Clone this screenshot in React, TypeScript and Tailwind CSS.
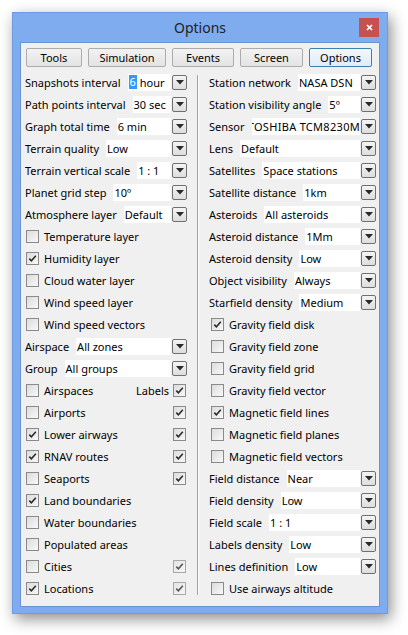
import React from "react";

const Tri = () => (
  <svg width="8" height="5" viewBox="0 0 8 5">
    <path d="M0 0H8L4 4.5Z" fill="#2a2a2a" />
  </svg>
);

const DropBtn = () => (
  <div className="ml-[1px] w-[15px] h-[15px] shrink-0 rounded-[2px] border border-[#707070] bg-linear-to-b from-[#f4f4f4] to-[#dddddd] flex items-center justify-center">
    <Tri />
  </div>
);

type ComboProps = { label: string; value: string; sel?: string; clip?: boolean };

const Combo = ({ label, value, sel, clip }: ComboProps) => (
  <div className="h-[22px] flex items-center">
    <span className="whitespace-nowrap">{label}</span>
    <div
      className={
        clip
          ? "ml-[7px] flex-1 min-w-0 h-[17px] bg-white flex items-center justify-end overflow-hidden whitespace-nowrap"
          : "ml-[7px] flex-1 min-w-0 h-[17px] bg-white flex items-center overflow-hidden whitespace-nowrap pl-[1px]"
      }
    >
      {sel ? (
        <span className="bg-[#3399ff] text-white h-[14px] leading-[14px] px-[1px]">{sel}</span>
      ) : null}
      <span className={clip ? "whitespace-pre shrink-0 tracking-[0.3px]" : "whitespace-pre"}>{value}</span>
    </div>
    <DropBtn />
  </div>
);

const Box = ({ checked, disabled }: { checked?: boolean; disabled?: boolean }) => (
  <div
    className={
      disabled
        ? "w-[13px] h-[13px] shrink-0 border border-[#a8a8a8] bg-linear-to-br from-[#e4e4e4] to-[#f6f6f6] flex items-center justify-center"
        : "w-[13px] h-[13px] shrink-0 border border-[#8a8a8a] bg-linear-to-br from-[#dcdcdc] to-[#f8f8f8] flex items-center justify-center"
    }
  >
    {checked ? (
      <svg width="9" height="9" viewBox="0 0 9 9">
        <path
          d="M1.3 4.6L3.4 6.8L7.8 1.8"
          fill="none"
          stroke={disabled ? "#555" : "#2b2b2b"}
          strokeWidth="1.6"
        />
      </svg>
    ) : null}
  </div>
);

type CheckProps = {
  label: string;
  checked?: boolean;
  right?: boolean;
  rightLabel?: string;
  rightDisabled?: boolean;
  offset?: "l" | "r";
};

const Check = ({ label, checked, right, rightLabel, rightDisabled, offset = "l" }: CheckProps) => (
  <div className="h-[22px] flex items-center">
    <div className={offset === "l" ? "ml-[1px]" : "ml-[2px]"}>
      <Box checked={checked} />
    </div>
    <span className="ml-[5px] whitespace-nowrap">{label}</span>
    {right !== undefined ? (
      <div className="ml-auto flex items-center mr-[1px]">
        {rightLabel ? <span className="mr-[4px]">{rightLabel}</span> : null}
        <Box checked={right} disabled={rightDisabled} />
      </div>
    ) : null}
  </div>
);

const Tab = ({ label, w, active }: { label: string; w: string; active?: boolean }) => (
  <div
    className={
      (active
        ? "border-[#3c7fb1] from-[#f2f8fd] to-[#dfecf8] "
        : "border-[#acacac] from-[#f2f2f2] to-[#e3e3e3] ") +
      w +
      " h-[19px] border bg-linear-to-b flex items-center justify-center rounded-[2px]"
    }
  >
    {label}
  </div>
);

export default function App() {
  return (
    <div className="w-[408px] h-[635px] bg-white pt-[12px] pl-[12px] font-['Noto_Sans',sans-serif] text-[11px] text-black leading-none">
      <div className="w-[376px] h-[602px] border border-[#6d9be3] bg-[#7fabef] shadow-[3px_5px_14px_rgba(0,0,0,0.45)] flex flex-col">
        {/* title bar */}
        <div className="h-[29px] grid grid-cols-[1fr_auto_1fr] items-start shrink-0">
          <div />
          <div className="text-[14px] text-[#222] mt-[8px]">Options</div>
          <div className="flex justify-end pr-[8px] pt-[5px]">
            <div className="w-[20px] h-[19px] bg-[#c75050] flex items-center justify-center">
              <svg width="7" height="7" viewBox="0 0 7 7">
                <path d="M1 1L6 6M6 1L1 6" stroke="#fff" strokeWidth="1.7" />
              </svg>
            </div>
          </div>
        </div>
        {/* content */}
        <div className="mx-[7px] h-[565px] border border-[#6a93d2] bg-[#f0f0f0] flex flex-col">
          <div className="pt-[5px] pl-[5px] flex gap-[6px]">
            <Tab label="Tools" w="w-[56px]" />
            <Tab label="Simulation" w="w-[78px]" />
            <Tab label="Events" w="w-[62px]" />
            <Tab label="Screen" w="w-[63px]" />
            <Tab label="Options" w="w-[63px]" active />
          </div>
          <div className="mt-[4px] flex">
            {/* left column */}
            <div className="ml-[4px] w-[162px] flex flex-col">
              <Combo label="Snapshots interval" sel="6" value={"\u00a0hour"} />
              <Combo label="Path points interval" value="30 sec" />
              <Combo label="Graph total time" value="6 min" />
              <Combo label="Terrain quality" value="Low" />
              <Combo label="Terrain vertical scale" value="1 : 1" />
              <Combo label="Planet grid step" value="10º" />
              <Combo label="Atmosphere layer" value="Default" />
              <Check label="Temperature layer" />
              <Check label="Humidity layer" checked />
              <Check label="Cloud water layer" />
              <Check label="Wind speed layer" />
              <Check label="Wind speed vectors" />
              <Combo label="Airspace" value="All zones" />
              <Combo label="Group" value="All groups" />
              <Check label="Airspaces" right={true} rightLabel="Labels" />
              <Check label="Airports" right={true} />
              <Check label="Lower airways" checked right={true} />
              <Check label="RNAV routes" checked right={true} />
              <Check label="Seaports" right={true} />
              <Check label="Land boundaries" checked />
              <Check label="Water boundaries" />
              <Check label="Populated areas" />
              <Check label="Cities" right={true} rightDisabled />
              <Check label="Locations" checked right={true} rightDisabled />
            </div>
            {/* divider */}
            <div className="w-[22px] flex justify-center py-[4px]">
              <div className="w-[2px] border-l border-[#a0a0a0] bg-white" />
            </div>
            {/* right column */}
            <div className="w-[167px] flex flex-col">
              <Combo label="Station network" value="NASA DSN" />
              <Combo label="Station visibility angle" value="5º" />
              <Combo label="Sensor" value="TOSHIBA TCM8230M" clip />
              <Combo label="Lens" value="Default" />
              <Combo label="Satellites" value="Space stations" />
              <Combo label="Satellite distance" value="1km" />
              <Combo label="Asteroids" value="All asteroids" />
              <Combo label="Asteroid distance" value="1Mm" />
              <Combo label="Asteroid density" value="Low" />
              <Combo label="Object visibility" value="Always" />
              <Combo label="Starfield density" value="Medium" />
              <Check label="Gravity field disk" checked offset="r" />
              <Check label="Gravity field zone" offset="r" />
              <Check label="Gravity field grid" offset="r" />
              <Check label="Gravity field vector" offset="r" />
              <Check label="Magnetic field lines" checked offset="r" />
              <Check label="Magnetic field planes" offset="r" />
              <Check label="Magnetic field vectors" offset="r" />
              <Combo label="Field distance" value="Near" />
              <Combo label="Field density" value="Low" />
              <Combo label="Field scale" value="1 : 1" />
              <Combo label="Labels density" value="Low" />
              <Combo label="Lines definition" value="Low" />
              <Check label="Use airways altitude" offset="r" />
            </div>
          </div>
        </div>
      </div>
    </div>
  );
}
